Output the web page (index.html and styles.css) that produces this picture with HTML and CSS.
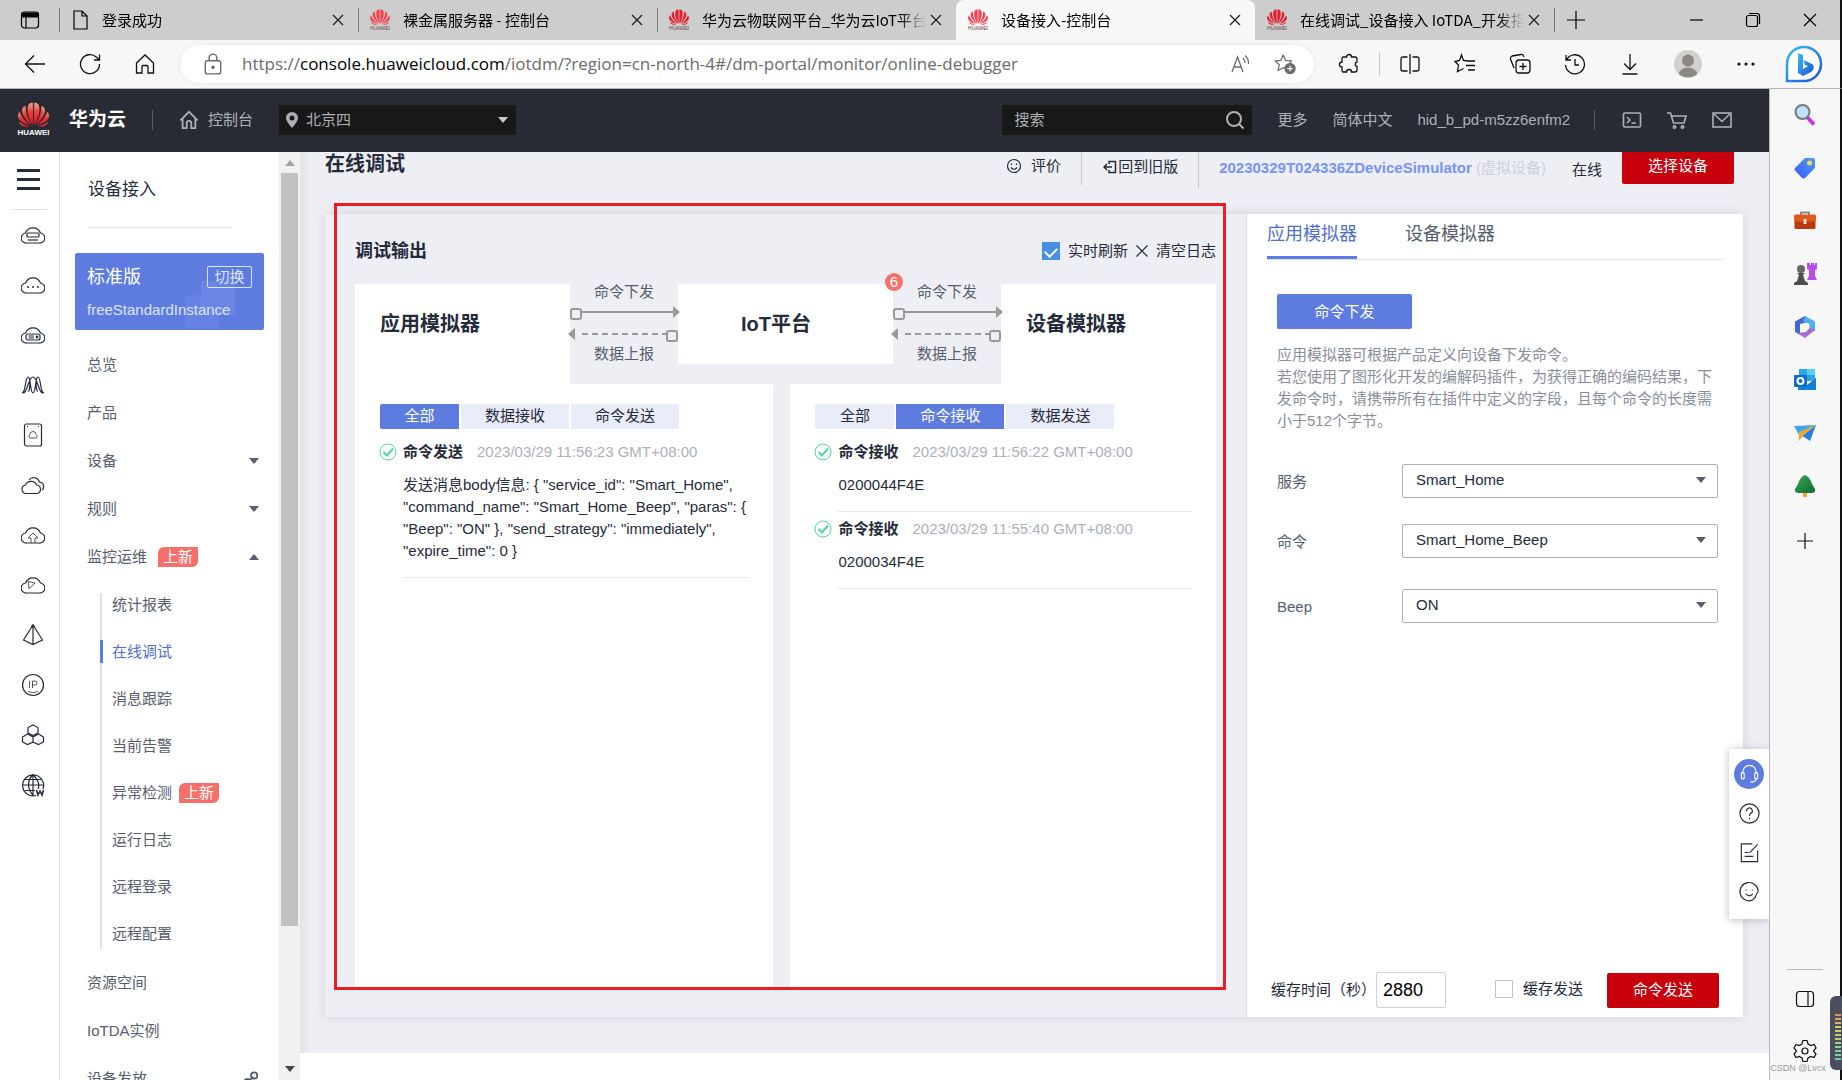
FILE: index.html
```html
<!DOCTYPE html>
<html lang="zh-CN">
<head>
<meta charset="utf-8">
<title>设备接入-控制台</title>
<link rel="stylesheet" href="styles.css">
</head>
<body>
<svg class="defs" aria-hidden="true">
  <defs>
    <linearGradient id="petalFill" x1="0" y1="0" x2="0" y2="1"><stop offset="0" stop-color="#f8a48c"/><stop offset=".45" stop-color="#ec3a38"/><stop offset="1" stop-color="#d81422"/></linearGradient>
    <linearGradient id="bingFill" x1="0" y1="0" x2="1" y2="1"><stop offset="0" stop-color="#35c1f1"/><stop offset="1" stop-color="#1b4fd8"/></linearGradient>
    <linearGradient id="tagFill" x1="0" y1="1" x2="1" y2="0"><stop offset="0" stop-color="#3b5bfd"/><stop offset="1" stop-color="#4f9bf0"/></linearGradient>
    <linearGradient id="treeFill" x1="0" y1="0" x2="1" y2="1"><stop offset="0" stop-color="#3ea55a"/><stop offset="1" stop-color="#0c6b2c"/></linearGradient>
    <symbol id="flower" viewBox="0 0 34 26">
      <path d="M16.600 24C11 17 9.500 6 12 2.500C13 1 15 .5 16.300 .8Z"/><path d="M17.400 24C23 17 24.500 6 22 2.500C21 1 19 .5 17.700 .8Z"/>
      <path d="M15.500 24C8.500 19 4.500 12.500 5 8C5.300 6 7.500 4.300 8.600 4.200C8.600 11 11 18 15.500 24Z"/><path d="M18.500 24C25.500 19 29.500 12.500 29 8C28.700 6 26.500 4.300 25.400 4.200C25.400 11 23 18 18.500 24Z"/>
      <path d="M14 24.200C6 22.500 .8 18.500 .8 14.500C.8 12.500 1.800 11 2.500 10.500C4.500 16 9 21 14 24.200Z"/><path d="M20 24.200C28 22.500 33.200 18.500 33.200 14.500C33.200 12.500 32.200 11 31.500 10.500C29.500 16 25 21 20 24.200Z"/>
      <path d="M12.800 25C8 26.500 3.500 25.500 2 20.800C5 23 9 24.500 12.800 25Z"/><path d="M21.200 25C26 26.500 30.500 25.500 32 20.800C29 23 25 24.500 21.200 25Z"/>
    </symbol>
    <symbol id="close" viewBox="0 0 12 12"><path d="M1 1L11 11M11 1L1 11"/></symbol>
    <symbol id="cloud" viewBox="0 0 24 24"><path d="M6 20A5 5 0 0 1 4.500 10A8 8 0 0 1 19.500 10A5 5 0 0 1 18 20Z"/></symbol>
    <symbol id="pass" viewBox="0 0 18 18"><circle cx="9" cy="9" r="8" stroke-width="1"/><path d="M4.500 9L8 12.500L14 5.500" stroke-width="2"/></symbol>
    <symbol id="down" viewBox="0 0 10 8"><path d="M0 1H10L5 7Z"/></symbol>
  </defs>
</svg>

<header class="tabstrip">
  <button class="tab-menu" aria-label="标签页操作"><svg class="icon" viewBox="0 0 20 20"><rect x="1.500" y="2" width="17" height="16" rx="3"/><path d="M2 3H18V7H2Z" fill="currentColor"/><path d="M6 7V18"/></svg></button>
  <div class="tab"><svg class="icon" viewBox="0 0 20 20"><path d="M4 1H12L17 6V19H4Z M12 1V6H17"/></svg><a href="#">登录成功</a><button aria-label="关闭"><svg class="close"><use href="#close"/></svg></button></div>
  <div class="tab"><span class="fav soft"><svg><use href="#flower"/></svg><small>HUAWEI</small></span><a href="#">裸金属服务器 - 控制台</a><button aria-label="关闭"><svg class="close"><use href="#close"/></svg></button></div>
  <div class="tab"><span class="fav"><svg><use href="#flower"/></svg><small>HUAWEI</small></span><a href="#">华为云物联网平台_华为云IoT平台</a><button aria-label="关闭"><svg class="close"><use href="#close"/></svg></button></div>
  <div class="tab active"><span class="fav soft"><svg><use href="#flower"/></svg><small>HUAWEI</small></span><a href="#">设备接入-控制台</a><button aria-label="关闭"><svg class="close"><use href="#close"/></svg></button></div>
  <div class="tab"><span class="fav"><svg><use href="#flower"/></svg><small>HUAWEI</small></span><a href="#">在线调试_设备接入 IoTDA_开发指</a><button aria-label="关闭"><svg class="close"><use href="#close"/></svg></button></div>
  <button class="new-tab" aria-label="新建标签页"><svg class="icon" viewBox="0 0 20 20"><path d="M10 1V19M1 10H19"/></svg></button>
  <div class="window-buttons">
    <button aria-label="最小化"><svg class="icon" viewBox="0 0 20 20"><path d="M4 10H17"/></svg></button>
    <button aria-label="还原"><svg class="icon" viewBox="0 0 20 20"><rect x="3.500" y="5.500" width="11" height="11" rx="2"/><path d="M6 3.500H14A2.500 2.500 0 0 1 16.500 6V14"/></svg></button>
    <button aria-label="关闭窗口"><svg class="icon" viewBox="0 0 20 20"><path d="M4 4L16 16M16 4L4 16"/></svg></button>
  </div>
</header>

<div class="toolbar">
  <div class="nav-buttons">
    <button aria-label="后退"><svg class="icon" viewBox="0 0 22 22"><path d="M21 11H2M10 2.500L1.500 11L10 19.500"/></svg></button>
    <button aria-label="刷新"><svg class="icon" viewBox="0 0 22 22"><path d="M20.500 11A9.500 9.500 0 1 1 17.500 4.200L20 6.500M20.500 1.500V7H15"/></svg></button>
    <button aria-label="主页"><svg class="icon" viewBox="0 0 22 22"><path d="M2.500 10L11 2L19.500 10V20H14V13.500A1.500 1.500 0 0 0 12.500 12.500H9.500A1.500 1.500 0 0 0 8 13.500V20H2.500Z"/></svg></button>
  </div>
  <div class="address">
    <svg class="icon" viewBox="0 0 20 20"><rect x="3" y="7" width="14" height="12" rx="2"/><path d="M6.500 7V4.500A3.500 3.500 0 0 1 13.500 4.500V7"/><circle cx="10" cy="13" r="1" fill="currentColor"/></svg>
    <span class="url">https://<b>console.huaweicloud.com</b>/iotdm/?region=cn-north-4#/dm-portal/monitor/online-debugger</span>
    <button aria-label="朗读"><svg class="icon" viewBox="0 0 22 22"><path d="M2 19L7.500 4L13 19M4 14H11M13 5Q15 7 15 10M15 2.500Q19 6 18.500 11"/></svg></button>
    <button aria-label="收藏"><svg class="icon" viewBox="0 0 24 24"><path d="M10 2L12.500 8L19 8.700L17 11M13 17L10 16L4.500 19L5.800 12.800L1.500 8.700L7.500 8L10 2"/><circle cx="17.500" cy="17" r="5.500" fill="#6b6b6b"/><path d="M17.500 14V20M14.500 17H20.500" stroke="#fff"/></svg></button>
  </div>
  <div class="browser-actions">
    <button aria-label="扩展"><svg class="icon" viewBox="0 0 22 22"><path d="M5 4H8.500A2.500 2.500 0 0 1 13.500 4H17Q19 4 19 6V9A2.300 2.300 0 0 0 19 13.500V17Q19 19 17 19H13.500A2.500 2.500 0 0 0 8.500 19H5Q4 19 4 17V14A2.500 2.500 0 0 1 4 9V6Q4 4 5 4Z"/></svg></button>
    <i class="bar-split"></i>
    <button aria-label="分屏"><svg class="icon" viewBox="0 0 22 22"><path d="M8.500 4H4A2 2 0 0 0 2 6V16A2 2 0 0 0 4 18H8.500M13.500 4H18A2 2 0 0 1 20 6V16A2 2 0 0 1 18 18H13.500M11 1V21"/></svg></button>
    <button aria-label="收藏夹"><svg class="icon" viewBox="0 0 22 22"><path d="M14 8L9.500 7.500L7.500 2L5.500 7.500L1 8.500L4.500 12L3.500 18.500L9.500 15.500M13 8H21M12 12.500H21M14 17H21"/></svg></button>
    <button aria-label="集锦"><svg class="icon" viewBox="0 0 22 22"><rect x="7" y="7" width="14" height="13" rx="3"/><path d="M14 10V17M10.500 13.500H17.500M5 15L1.500 6Q1 4 3 3L12 1.500Q14 1 15 4"/></svg></button>
    <button aria-label="历史记录"><svg class="icon" viewBox="0 0 22 22"><path d="M2.500 7A9.500 9.500 0 1 1 1.500 12M2 2V7H7M11 6V12H15"/></svg></button>
    <button aria-label="下载"><svg class="icon" viewBox="0 0 22 22"><path d="M11 1V16M5 10.500L11 16.500L17 10.500M3.500 21H18.500"/></svg></button>
    <button class="avatar" aria-label="用户"><svg viewBox="0 0 28 28"><circle cx="14" cy="14" r="14" fill="#d3d0cc"/><circle cx="14" cy="10.500" r="6" fill="#8b8884"/><path d="M5 24A9 6.500 0 0 1 23 24A14 14 0 0 1 5 24" fill="#8b8884"/></svg></button>
    <button aria-label="更多"><svg class="icon" viewBox="0 0 22 22"><g fill="currentColor" stroke="none"><circle cx="4" cy="11" r="1.600"/><circle cx="11" cy="11" r="1.600"/><circle cx="18" cy="11" r="1.600"/></g></svg></button>
    <button class="bing" aria-label="必应"><svg viewBox="0 0 38 38"><path d="M2 36V19A17 17 0 1 1 19 36Z" fill="#fff" stroke="url(#bingFill)" stroke-width="2.500"/><path d="M13 8L18 10V24L23 21L19.500 19.500L18.500 15L28 19.500Q30 24 26 27L18 31L13 28Z" fill="url(#bingFill)"/></svg></button>
  </div>
</div>

<div class="workspace">
  <div class="page">
    <header class="console-bar">
      <a class="brand" href="#"><span class="logo"><svg><use href="#flower"/></svg><small>HUAWEI</small></span><strong>华为云</strong></a>
      <i class="rule"></i>
      <a class="console-home" href="#"><svg class="icon thick" viewBox="0 0 22 22"><path d="M1.500 11.500L11 2L20.500 11.500M4 9.500V20H8.500V14.500A2.500 2.500 0 0 1 13.500 14.500V20H18V9.500"/></svg>控制台</a>
      <button class="region"><svg class="pin" viewBox="0 0 12 16"><path d="M6 0A6 6 0 0 1 12 6Q12 9 6 16Q0 9 0 6A6 6 0 0 1 6 0ZM6 3.500A2.500 2.500 0 1 0 6 8.500A2.500 2.500 0 1 0 6 3.500Z" fill-rule="evenodd"/></svg><span>北京四</span><svg class="caret"><use href="#down"/></svg></button>
      <label class="search"><input type="text" placeholder="搜索" aria-label="搜索"><svg class="icon thick" viewBox="0 0 20 20"><circle cx="9" cy="9" r="7"/><path d="M14 14L18.500 18.500"/></svg></label>
      <nav class="account"><a href="#">更多</a><a href="#">简体中文</a><a href="#">hid_b_pd-m5zz6enfm2</a></nav>
      <i class="rule"></i>
      <div class="quick">
        <a href="#" aria-label="终端"><svg class="icon" viewBox="0 0 20 20"><rect x="1.500" y="3" width="17" height="14" rx="1"/><path d="M5 7L8 10L5 13M9.500 13H14"/></svg></a>
        <a href="#" aria-label="购物车"><svg class="icon" viewBox="0 0 20 20"><path d="M0 3H3.500L6.500 13H17L19 6H4.500"/><circle cx="7.500" cy="17" r="1.200"/><circle cx="15.500" cy="17" r="1.200"/></svg></a>
        <a href="#" aria-label="消息"><svg class="icon" viewBox="0 0 20 20"><rect x="1" y="3" width="18" height="14"/><path d="M2 4L10 11.500L18 4"/></svg></a>
      </div>
    </header>

    <div class="body">
      <nav class="rail">
        <button class="burger" aria-label="服务列表"><span></span><span></span><span></span></button>
        <a href="#" aria-label="弹性云服务器"><svg class="icon" viewBox="0 0 24 24"><use href="#cloud"/><rect x="6" y="10" width="12" height="4" rx="1"/><path d="M7 17H17"/></svg></a>
        <a href="#" aria-label="云服务"><svg class="icon" viewBox="0 0 24 24"><use href="#cloud"/><g fill="currentColor" stroke="none"><circle cx="7" cy="14" r="1"/><circle cx="12" cy="14" r="1"/><circle cx="17" cy="14" r="1"/></g></svg></a>
        <a href="#" aria-label="裸金属服务器"><svg class="icon" viewBox="0 0 24 24"><use href="#cloud"/><rect x="5" y="11" width="14" height="6" rx="2"/><path d="M7.500 13H13M7.500 15H13"/><circle cx="16" cy="14" r=".8"/></svg></a>
        <a href="#" aria-label="弹性伸缩"><svg class="icon" viewBox="0 0 24 24"><path d="M1 20C5 20 4 4 7 4S9 20 12 20S14 4 17 4S19 20 23 20M2 20C7 20 7 4 12 4S17 20 22 20M7 4C10 4 9 20 7 18M17 4C14 4 15 20 17 18"/></svg></a>
        <a href="#" aria-label="云硬盘"><svg class="icon" viewBox="0 0 24 24"><rect x="3.500" y="1" width="17" height="22" rx="2"/><path d="M9 15A2 2 0 0 1 9 11.500A3 3 0 0 1 15 11.500A2 2 0 0 1 15 15Z" stroke-width=".8"/><path d="M6 3.500H7M17 3.500H18"/></svg></a>
        <a href="#" aria-label="虚拟私有云"><svg class="icon" viewBox="0 0 24 24"><path d="M5 20.500A4.300 4.300 0 0 1 4.500 12A6 6 0 0 1 15.500 12A4.300 4.300 0 0 1 16 20.500ZM8 7A6 6 0 0 1 18.500 9A4.500 4.500 0 0 1 21 17"/></svg></a>
        <a href="#" aria-label="云备份"><svg class="icon" viewBox="0 0 24 24"><use href="#cloud"/><path d="M10 20V15H7L12 10L17 15H14V20" stroke-width=".8"/></svg></a>
        <a href="#" aria-label="CDN"><svg class="icon" viewBox="0 0 24 24"><use href="#cloud"/><path d="M7 8.500L14 10L8 15.500Z" stroke-width=".8"/></svg></a>
        <a href="#" aria-label="负载均衡"><svg class="icon" viewBox="0 0 24 24"><path d="M12 2L2.500 17L12 21.500L21.500 17ZM12 2V21"/><circle cx="12" cy="3" r="1" fill="currentColor"/></svg></a>
        <a href="#" aria-label="弹性公网IP"><svg class="icon" viewBox="0 0 24 24"><circle cx="12" cy="12" r="10.500"/><path d="M8.500 8V15M11.500 15V8H14A2 2 0 0 1 14 12H11.500M7 18.500Q12 21 17 18.500" stroke-width=".8"/></svg></a>
        <a href="#" aria-label="数据库"><svg class="icon" viewBox="0 0 24 24"><path d="M12 2L17 4.500V10L12 12.500L7 10V4.500ZM6.500 11L12 14V19L6.500 21.500L1.500 19V14ZM17.500 11L12 14V19L17.500 21.500L22.500 19V14Z"/></svg></a>
        <a href="#" aria-label="域名"><svg class="icon" viewBox="0 0 24 24"><path d="M22 16A10.500 10.500 0 1 0 15 22.500M12 1.500V22M2 12H22M4 6.500H20M4 17.500H14M12 1.500Q3 11 12 22.500M12 1.500Q20 10 17 16"/><path d="M15.500 17L17 22L19 18L21 22L22.500 17" stroke-width="1.600"/></svg></a>
      </nav>

      <aside class="side">
        <h2>设备接入</h2>
        <section class="instance">
          <div><strong>标准版</strong><button>切换</button></div>
          <p>freeStandardInstance</p>
        </section>
        <ul class="menu">
          <li><a href="#">总览</a></li>
          <li><a href="#">产品</a></li>
          <li><a href="#">设备<svg class="caret"><use href="#down"/></svg></a></li>
          <li><a href="#">规则<svg class="caret"><use href="#down"/></svg></a></li>
          <li><a href="#">监控运维<em class="new">上新</em><svg class="caret up"><use href="#down"/></svg></a>
            <ul class="submenu">
              <li><a href="#">统计报表</a></li>
              <li class="current"><a href="#">在线调试</a></li>
              <li><a href="#">消息跟踪</a></li>
              <li><a href="#">当前告警</a></li>
              <li><a href="#">异常检测<em class="new">上新</em></a></li>
              <li><a href="#">运行日志</a></li>
              <li><a href="#">远程登录</a></li>
              <li><a href="#">远程配置</a></li>
            </ul>
          </li>
          <li><a href="#">资源空间</a></li>
          <li><a href="#">IoTDA实例</a></li>
          <li><a href="#">设备发放<svg class="icon link" viewBox="0 0 18 18"><g stroke-width="2"><rect x="9" y="1.500" width="7" height="7" rx="3.500"/><rect x="1.500" y="9" width="7" height="7" rx="3.500"/><path d="M6.500 11.500L11.500 6.500"/></g></svg></a></li>
        </ul>
      </aside>
      <div class="scrollbar"><svg class="caret up"><use href="#down"/></svg><span></span><svg class="caret"><use href="#down"/></svg></div>

      <main>
        <div class="title-row">
          <h1>在线调试</h1>
          <a class="rate" href="#"><svg class="icon" viewBox="0 0 16 16"><circle cx="8" cy="8" r="6.500"/><path d="M5 9.500Q8 13 11 9.500M5.500 5.500V7M10.500 5.500V7"/></svg>评价</a>
          <a class="legacy" href="#"><svg class="icon" viewBox="0 0 14 16"><path d="M6 5V2.500H12.500V13.500H6V11M1 8H9M4 5L1 8L4 11" stroke-width="1.500"/></svg>回到旧版</a>
          <span class="device"><b>20230329T024336ZDeviceSimulator</b> (虚拟设备)</span>
          <span class="state">在线</span>
          <button class="danger">选择设备</button>
        </div>

        <div class="panel">
          <section class="output">
            <div class="output-head">
              <h3>调试输出</h3>
              <label class="tick"><input type="checkbox" checked>实时刷新</label>
              <button class="clear"><svg class="icon" viewBox="0 0 14 14"><path d="M1.500 1.500L12.500 12.500M12.500 1.500L1.500 12.500"/></svg>清空日志</button>
            </div>
            <div class="flow">
              <h4>应用模拟器</h4>
              <div class="link-pair"><span>命令下发</span>
                <svg viewBox="0 0 112 36"><path d="M14 6H106"/><path d="M14 28H98" stroke-dasharray="6 4"/><rect x="3" y="3" width="10" height="10" rx="2"/><rect x="99" y="25" width="10" height="10" rx="2"/><path class="tip" d="M105 0L112 6L105 12ZM7 22L0 28L7 34Z"/></svg>
                <span>数据上报</span></div>
              <h4 class="iot">IoT平台<em>6</em></h4>
              <div class="link-pair"><span>命令下发</span>
                <svg viewBox="0 0 112 36"><path d="M14 6H106"/><path d="M14 28H98" stroke-dasharray="6 4"/><rect x="3" y="3" width="10" height="10" rx="2"/><rect x="99" y="25" width="10" height="10" rx="2"/><path class="tip" d="M105 0L112 6L105 12ZM7 22L0 28L7 34Z"/></svg>
                <span>数据上报</span></div>
              <h4>设备模拟器</h4>
            </div>
            <div class="logs">
              <div class="log">
                <div class="filter"><button class="on">全部</button><button>数据接收</button><button>命令发送</button></div>
                <article><svg><use href="#pass"/></svg><header><b>命令发送</b><time>2023/03/29 11:56:23 GMT+08:00</time></header><p>发送消息body信息: { "service_id": "Smart_Home", "command_name": "Smart_Home_Beep", "paras": { "Beep": "ON" }, "send_strategy": "immediately", "expire_time": 0 }</p></article>
              </div>
              <div class="log">
                <div class="filter"><button>全部</button><button class="on">命令接收</button><button>数据发送</button></div>
                <article><svg><use href="#pass"/></svg><header><b>命令接收</b><time>2023/03/29 11:56:22 GMT+08:00</time></header><p>0200044F4E</p></article>
                <article><svg><use href="#pass"/></svg><header><b>命令接收</b><time>2023/03/29 11:55:40 GMT+08:00</time></header><p>0200034F4E</p></article>
              </div>
            </div>
            <div class="marker"></div>
          </section>

          <form class="simulator">
            <nav class="sim-tabs"><a class="on" href="#">应用模拟器</a><a href="#">设备模拟器</a></nav>
            <div class="sim-body">
              <button type="button" class="primary">命令下发</button>
              <p>应用模拟器可根据产品定义向设备下发命令。<br>若您使用了图形化开发的编解码插件，为获得正确的编码结果，下发命令时，请携带所有在插件中定义的字段，且每个命令的长度需小于512个字节。</p>
              <div class="field"><label for="service">服务</label><div class="select"><select id="service"><option>Smart_Home</option></select><svg class="caret"><use href="#down"/></svg></div></div>
              <div class="field"><label for="command">命令</label><div class="select"><select id="command"><option>Smart_Home_Beep</option></select><svg class="caret"><use href="#down"/></svg></div></div>
              <div class="field last"><label for="beep">Beep</label><div class="select"><select id="beep"><option>ON</option></select><svg class="caret"><use href="#down"/></svg></div></div>
            </div>
            <div class="send-row">
              <label for="ttl">缓存时间（秒）</label><input id="ttl" type="text" value="2880">
              <label class="tick"><input type="checkbox">缓存发送</label>
              <button type="button" class="danger">命令发送</button>
            </div>
          </form>
        </div>

        <div class="helper">
          <button class="agent" aria-label="客服"><svg class="icon" viewBox="0 0 24 24"><path d="M5 11V9.500A7 7 0 0 1 19 9.500V11M19 16Q19 20 13 20"/><rect x="3.500" y="10" width="3" height="6.500" rx="1"/><rect x="17.500" y="10" width="3" height="6.500" rx="1"/></svg></button>
          <button aria-label="帮助"><svg class="icon" viewBox="0 0 24 24"><circle cx="12" cy="12" r="10"/><path d="M9 9.500A3 3 0 1 1 13 12Q12 12.700 12 14.500M12 16.500V18"/></svg></button>
          <button aria-label="反馈"><svg class="icon" viewBox="0 0 24 24"><path d="M15 3H3.500V21.500H20.500V10M20.500 3.500L12 12.500M7 12H11M7 16H16"/></svg></button>
          <button aria-label="评价"><svg class="icon" viewBox="0 0 24 24"><path d="M15 21A9.500 9.500 0 1 1 21 12Q19 15 18 18L15 21M8 14.500Q12 18.500 15.500 14.500M8.500 10V11M15 10V11"/></svg></button>
        </div>
      </main>
    </div>
  </div>

  <aside class="edge">
    <button aria-label="搜索"><svg viewBox="0 0 24 24"><path d="M14 14L21 21.500" stroke="#c239e8" stroke-width="4"/><circle cx="9.500" cy="9" r="7" fill="#bfe2f8" stroke="#77777c" stroke-width="2"/></svg></button>
    <button aria-label="购物"><svg viewBox="0 0 24 24"><path d="M2 12L12 2H20Q22 2 22 4V12L12 22Q10 23 8.500 21.500L2 14.500Q1 13 2 12Z" fill="url(#tagFill)"/><circle cx="16.500" cy="7" r="2.500" fill="#f4dd56"/></svg></button>
    <button aria-label="工具"><svg viewBox="0 0 24 24"><path d="M8 7V3.500H16V7" fill="none" stroke="#8a8a8a" stroke-width="2"/><rect x="1.500" y="9" width="21" height="11" rx="1.500" fill="#b73a0c"/><rect x="1" y="5.500" width="22" height="7" rx="1.500" fill="#e05a1d"/><rect x="10.500" y="10" width="3" height="5" fill="#ddd"/></svg></button>
    <button aria-label="游戏"><svg viewBox="0 0 24 24"><path d="M14 1H17V3H18V1H21V3H22V1H24V7L22 8V14L24 18H14L16 14V8L14 7Z" fill="#b74df0"/><circle cx="8" cy="7" r="4" fill="#666"/><path d="M4 11H12L10 13L12 19L15 21V23H1V21L4 19L6 13Z" fill="#4d4d4d"/></svg></button>
    <button aria-label="Microsoft 365"><svg viewBox="0 0 24 24"><path d="M12 1L2 6.500V17L7 19.500V9L17 6.500Z" fill="#4564d8"/><path d="M12 1L22 6.500V16L16.500 13V9L10 6Z" fill="#49b1ec"/><path d="M22 15L12 23L4 18L13 17L17 12.500Z" fill="#a36bd4"/></svg></button>
    <button aria-label="Outlook"><svg viewBox="0 0 24 24"><rect x="6" y="1" width="16" height="12" fill="#2fa5e8"/><rect x="14" y="1" width="8" height="6" fill="#54d0fb"/><path d="M5 11L14 17L23 10V22H5Z" fill="#147fd4"/><rect x="1" y="7" width="13" height="12" rx="1" fill="#0a6fc4"/><circle cx="7.500" cy="13" r="3" fill="none" stroke="#fff" stroke-width="2"/></svg></button>
    <button aria-label="投递"><svg viewBox="0 0 24 24"><path d="M1 5L23 4L6 14Z" fill="#3ea7ec"/><path d="M23 4L6 11V20L11 14Z" fill="#f1a52a"/><path d="M23 4L9.500 15L17 20Z" fill="#2380df"/></svg></button>
    <button aria-label="E-tree"><svg viewBox="0 0 24 24"><rect x="10" y="17" width="4" height="6" fill="#f0a32f"/><path d="M12 1Q17 3 19 10L22 15Q23 19 18 19H6Q1 19 2 15L5 10Q7 3 12 1Z" fill="url(#treeFill)"/></svg></button>
    <button class="add" aria-label="添加"><svg class="icon" viewBox="0 0 24 24"><path d="M12 4V20M4 12H20"/></svg></button>
    <div class="edge-foot">
      <button aria-label="隐藏边栏"><svg class="icon" viewBox="0 0 24 24"><rect x="3.500" y="4.500" width="17" height="15" rx="3"/><path d="M15 5V19"/></svg></button>
      <button aria-label="设置"><svg class="icon" viewBox="0 0 24 24"><path d="M10 1.500H14L15 5L18 6.500L21 5.500L23 9L20.500 12L23 15L21 18.500L18 17.500L15 19L14 22.500H10L9 19L6 17.500L3 18.500L1 15L3.500 12L1 9L3 5.500L6 6.500L9 5Z"/><circle cx="12" cy="12" r="3"/></svg></button>
      <small>CSDN @Lvcx</small>
    </div>
    <div class="meter"><span></span></div>
  </aside>
</div>
</body>
</html>
```

FILE: styles.css
```css
* { box-sizing: border-box; }
body {
  margin: 0;
  height: 100vh;
  overflow: hidden;
  display: flex;
  flex-direction: column;
  font: 15px/22px "Liberation Sans", "Noto Sans CJK SC", sans-serif;
  color: #252b3a;
  background: #fff;
}
h1, h2, h3, h4, p, ul { margin: 0; padding: 0; }
ul { list-style: none; }
a { color: inherit; text-decoration: none; }
button { font: inherit; color: inherit; background: none; border: 0; padding: 0; display: grid; place-items: center; }
em { font-style: normal; }
svg { display: block; flex: none; }
.defs { position: absolute; width: 0; height: 0; }
.icon { width: 20px; height: 20px; fill: none; stroke: currentColor; stroke-width: 1.2; }
.thick { stroke-width: 2; }
.caret { width: 10px; height: 8px; fill: #575d6c; }
.up { transform: rotate(180deg); }

/* tab strip */
.tabstrip { height: 40px; flex: none; display: flex; align-items: center; background: #cdcdcd; color: #000; border-right: 2px solid #111; font-family: "Noto Sans CJK SC", sans-serif; }
.tab-menu { width: 59px; height: 40px; }
.tab { width: 299px; height: 40px; padding: 0 14px 0 11px; display: flex; align-items: center; gap: 12px; position: relative; }
.tab::before { content: ""; position: absolute; left: 0; top: 8px; height: 24px; border-left: 1px solid #777; }
.tab a { flex: 1; margin-right: -8px; overflow: hidden; white-space: nowrap; mask-image: linear-gradient(90deg, #000 88%, transparent); }
.tab.active { background: #f7f7f7; border-radius: 8px 8px 0 0; }
.tab.active::before, .tab.active + .tab::before { display: none; }
.close { width: 12px; height: 12px; stroke: #222; stroke-width: 1.3; }
.fav { width: 22px; display: flex; flex-direction: column; align-items: center; fill: #e5202e; }
.fav svg { width: 22px; height: 16px; }
.fav.soft { fill: #f4444f; }
.fav small { font: 5px/6px "Liberation Sans", sans-serif; color: #644; }
.new-tab { width: 44px; border-left: 1px solid #777; height: 24px; padding-right: 2px; }
.window-buttons { margin-left: auto; display: flex; gap: 37px; padding-right: 20px; }

/* address bar */
.toolbar { height: 49px; flex: none; display: flex; align-items: center; background: #f7f7f7; color: #111; border-bottom: 1px solid #b5b5b5; border-right: 2px solid #111; }
.toolbar .icon { width: 22px; height: 22px; stroke-width: 1.3; }
.nav-buttons { width: 180px; display: flex; padding-left: 24px; gap: 33px; }
.address { flex: 1; height: 38px; display: flex; align-items: center; border-radius: 19px; padding: 0 18px 0 22px; background: #fff; color: #6b6b6b; box-shadow: 0 0 4px #e4e4e4; }
.url { flex: 1; padding-left: 18px; font: 17px/24px "Open Sans", sans-serif; white-space: nowrap; }
.url b { font-weight: 400; color: #000; }
.address button { margin-left: 22px; }
.browser-actions { width: 526px; display: flex; align-items: center; gap: 33px; padding-left: 24px; }
.bar-split { height: 24px; margin: 0 -14px; border-left: 1px solid #c8c8c8; }
.avatar svg { width: 28px; height: 28px; }
.bing { margin-left: -5px; }
.bing svg { width: 38px; height: 38px; }

.workspace { flex: 1; min-height: 0; display: flex; }
.page { flex: 1; min-width: 0; display: flex; flex-direction: column; }

/* console header */
.console-bar { height: 63px; flex: none; display: flex; align-items: center; padding: 0 37px 2px 16px; background: #282b33; color: #adb0b8; }
.brand { display: flex; align-items: center; gap: 18px; color: #fff; }
.brand strong { font-size: 19px; }
.logo { width: 35px; display: flex; flex-direction: column; align-items: center; gap: 1px; fill: url(#petalFill); }
.logo svg { width: 33px; height: 25px; }
.logo small { font: bold 8px/9px "Liberation Sans", sans-serif; }
.rule { height: 20px; border-left: 1px solid #5a5d66; margin: 0 26px; }
.console-home { display: flex; align-items: center; gap: 9px; }
.region { width: 237px; height: 30px; margin-left: 26px; padding: 0 8px 0 7px; display: flex; align-items: center; gap: 8px; background: #181818; border-radius: 2px; }
.region span { flex: 1; text-align: left; }
.region .caret { fill: #c5c8d0; height: 10px; }
.pin { width: 12px; height: 16px; fill: #adb0b8; }
.search { width: 250px; height: 30px; margin-left: auto; padding: 0 7px 0 12px; display: flex; align-items: center; background: #181818; border-radius: 2px; }
.search input { flex: 1; min-width: 0; border: 0; padding: 0; background: none; color: inherit; font: inherit; }
.search input::placeholder { color: #adb0b8; }
.account { display: flex; gap: 25px; padding-left: 25px; }
.account + .rule { margin: 0 27px 0 24px; }
.quick { display: flex; gap: 25px; }
.quick .icon { stroke-width: 1.6; }

.body { flex: 1; min-height: 0; display: flex; }

/* service rail */
.rail { width: 60px; flex: none; display: flex; flex-direction: column; border-right: 1px solid #dfe1e6; }
.rail a { height: 50px; padding-left: 6px; display: grid; place-items: center; }
.rail a .icon { width: 24px; height: 24px; }
.burger { width: 34px; height: 58px; margin: 0 13px; align-content: center; gap: 6px; border-bottom: 1px solid #dfe1e6; justify-items: start; padding: 0 0 3px 4px; }
.burger span { width: 23px; height: 3px; background: #252b3a; }

/* product navigation */
.side { width: 219px; flex: none; overflow: hidden; padding: 0 15px; }
.side h2 { height: 76px; margin: 0 32px 25px 13px; padding-top: 26px; font-size: 17px; line-height: 24px; font-weight: 400; border-bottom: 1px solid #dfe1e6; }
.instance { height: 77px; padding: 12px 12px 0; border-radius: 2px; color: #fff; background: linear-gradient(#6a86e4, #6a86e4) 126px 28px / 34px 34px no-repeat, linear-gradient(#6581e2, #6581e2) 110px 42px / 34px 33px no-repeat, #5e7ce0; }
.instance div { display: flex; align-items: center; justify-content: space-between; height: 24px; }
.instance strong { font-size: 18px; font-weight: 400; }
.instance button { width: 45px; height: 22px; border: 1px solid #dfe5f9; border-radius: 2px; color: #dfe5f9; line-height: 18px; }
.instance p { padding-top: 10px; color: #dfe5f9; }
.menu { padding-top: 11px; color: #575d6c; }
.menu a { height: 48px; display: flex; align-items: center; padding: 0 5px 0 12px; }
.menu .caret, .menu .link { margin-left: auto; }
.link { width: 16px; height: 16px; }
.submenu { position: relative; padding: 0 0 2px 25px; }
.submenu::before { content: ""; position: absolute; left: 25px; top: 12px; bottom: 10px; width: 2px; background: #dfe1e6; }
.submenu a { height: 47px; }
.current { position: relative; color: #526ecc; }
.current::before { content: ""; position: absolute; left: 0; top: 12px; width: 3px; height: 23px; background: #5e7ce0; }
.new { margin-left: 11px; padding: 0 5px; height: 20px; line-height: 19px; border-radius: 6px 0; background: #f66f6a; color: #fff; }
.submenu .new { margin-left: 7px; }
.scrollbar { width: 21px; flex: none; display: flex; flex-direction: column; align-items: center; padding: 7px 0; gap: 6px; background: #f1f1f1; }
.scrollbar span { width: 17px; height: 753px; background: #c1c1c1; }
.scrollbar .caret { fill: #a3a3a3; }
.scrollbar .caret:last-child { margin-top: auto; fill: #444; }

/* debugger page */
main { flex: 1; min-width: 0; position: relative; padding: 0 26px 0 25px; background: linear-gradient(90deg, #e2e3e9, transparent 10px), #eeeff5; margin-bottom: 27px; }
.title-row { height: 62px; display: flex; align-items: flex-start; white-space: nowrap; }
.title-row h1 { font-size: 20px; line-height: 24px; margin-right: auto; }
.title-row .rate { display: flex; align-items: center; gap: 9px; padding: 3px 20px 8px 0; border-right: 1px solid #c6c8d0; }
.rate .icon { width: 16px; height: 16px; }
.legacy { display: flex; align-items: center; gap: 1px; padding: 4px 20px 10px 21px; border-right: 1px solid #c6c8d0; }
.legacy .icon { width: 14px; height: 16px; }
.device { padding: 5px 26px 0 20px; color: #cdd0d9; }
.device b { color: #7693f5; }
.state { padding: 7px 20px 0 0; }
.danger { width: 112px; height: 35px; background: #c7000b; color: #fff; border-radius: 2px; }
.title-row .danger { height: 32px; margin-right: 9px; padding-bottom: 4px; border-radius: 0 0 2px 2px; }
.panel { height: 803px; display: flex; box-shadow: 0 0 10px #cfd0d6; }
.output { flex: 1; min-width: 0; position: relative; padding: 0 30px 30px; display: flex; flex-direction: column; background: #eeeff5; border-right: 1px solid #dfe1e6; }
.output-head { height: 70px; flex: none; display: flex; align-items: center; padding-top: 3px; }
.output-head h3 { font-size: 18px; margin-right: auto; }
.tick { display: flex; align-items: center; gap: 8px; }
.tick input { appearance: none; margin: 0; width: 18px; height: 18px; border: 1px solid #c2c5cf; background: #fff; display: grid; place-items: center; }
.tick input:checked { background: #4a90e2; border-color: #4a90e2; }
.tick input:checked::before { content: ""; width: 10px; height: 6px; border: solid #fff; border-width: 0 0 2px 2px; transform: rotate(-45deg); }
.clear { display: flex; align-items: center; gap: 7px; margin-left: 7px; }
.clear .icon { width: 14px; height: 14px; }
.flow { display: grid; grid-template-columns: 215fr 108fr 215fr 108fr 215fr; height: 100px; flex: none; }
.flow h4 { background: #fff; font-size: 20px; line-height: 80px; padding-left: 25px; }
.flow .iot { height: 80px; position: relative; padding-left: 63px; }
.iot em { position: absolute; right: -10px; top: -11px; width: 18px; height: 18px; border-radius: 9px; background: #f66f6a; color: #fff; font: 15px/18px "Liberation Sans", sans-serif; text-align: center; }
.link-pair { display: flex; flex-direction: column; align-items: center; height: 84px; line-height: 16px; color: #575d6c; z-index: 1; }
.link-pair svg { width: 112px; height: 36px; margin: 6px -3px 0; fill: none; stroke: #999; stroke-width: 2; }
.link-pair .tip { fill: #999; stroke: none; }
.link-pair span:last-child { padding-top: 4px; }
.logs { flex: 1; display: flex; gap: 17px; }
.log { background: #fff; padding: 20px 24px 0 25px; flex: 426; }
.log:first-child { flex: 418; }
.filter { display: flex; gap: 2px; }
.filter button { width: 108px; height: 25px; background: #e9edfa; padding-bottom: 1px; }
.filter button:first-child { width: 79px; border-radius: 2px 0 0 2px; }
.filter button:last-child { border-radius: 0 2px 2px 0; }
.filter .on { background: #5e7ce0; color: #fff; }
.log article { display: grid; grid-template-columns: 23px 1fr; padding-top: 12px; }
.log article + article { padding-top: 6px; }
.log article > svg { width: 18px; height: 18px; margin: 2px 0 0 -1px; fill: none; stroke: #50d4ab; }
.log header { display: flex; gap: 14px; }
.log time { color: #adb0b8; }
.log p { grid-column: 2; margin-top: 11px; padding-bottom: 15px; border-bottom: 1px solid #e6e7eb; }
.marker { position: absolute; left: 9px; right: 20px; top: -11px; bottom: 27px; border: 3px solid #ed1c24; pointer-events: none; }

/* simulator form */
.simulator { width: 496px; flex: none; display: flex; flex-direction: column; background: #fff; }
.sim-tabs { display: flex; gap: 48px; height: 46px; margin: 0 20px; border-bottom: 1px solid #dfe1e6; font-size: 18px; color: #575d6c; }
.sim-tabs a { height: 45px; padding-top: 9px; }
.sim-tabs .on { color: #526ecc; border-bottom: 3px solid #5e7ce0; }
.sim-body { padding: 34px 25px 0 30px; }
.primary { width: 135px; height: 35px; background: #5e7ce0; color: #fff; border-radius: 2px; }
.sim-body p { padding: 15px 0 32px; color: #8a8e99; }
.field { display: flex; align-items: center; height: 34px; margin-bottom: 26px; color: #575d6c; }
.field.last { margin-top: 31px; }
.field label { width: 125px; padding-top: 2px; }
.select { position: relative; flex: 1; height: 34px; }
.select select { appearance: none; width: 100%; height: 34px; padding: 0 13px 2px; border: 1px solid #adb0b8; border-radius: 2px; background: #fff; color: #252b3a; font: inherit; }
.select .caret { position: absolute; right: 12px; top: 12px; }
.send-row { margin-top: auto; display: flex; align-items: center; padding: 0 24px 9px 24px; white-space: nowrap; }
.send-row > input { width: 70px; height: 36px; padding: 0 6px; border: 1px solid #d0d2d9; border-radius: 2px; font: 18px "Liberation Sans", sans-serif; color: #000; }
.send-row .tick { margin: 0 24px 2px auto; gap: 10px; }

.helper { position: absolute; right: 0; top: 597px; width: 40px; height: 170px; padding-top: 10px; display: flex; flex-direction: column; align-items: center; gap: 9px; background: #fff; box-shadow: 0 1px 8px #b9bac2; }
.helper button { width: 30px; height: 30px; }
.helper .icon { width: 23px; height: 23px; }
.helper .agent { background: #5e7ce0; color: #fff; border-radius: 15px; }

/* browser side bar */
.edge { width: 73px; flex: none; position: relative; display: flex; flex-direction: column; align-items: center; padding-top: 14px; gap: 29px; background: #f7f7f7; color: #111; border-left: 1px solid #bbb; border-right: 2px solid #111; }
.edge button { width: 24px; height: 24px; }
.edge button svg { width: 24px; height: 24px; fill: none; }
.edge .add { margin-top: 2px; }
.edge-foot { margin-top: auto; display: flex; flex-direction: column; align-items: center; border-top: 1px solid #bbb; padding-top: 17px; width: 36px; gap: 28px; }
.edge-foot small { font: 9px/12px "Liberation Sans", sans-serif; color: #999; white-space: nowrap; margin: -29px 14px 6px 0; }
.meter { position: absolute; right: -2px; bottom: 10px; width: 12px; height: 74px; border-radius: 6px 0 0 6px; background: #4b4e5c; padding: 18px 1px 8px 5px; }
.meter span { display: block; height: 100%; background: repeating-linear-gradient(transparent 0 2px, #4b4e5c 2px 4px), linear-gradient(#e58c55, #d5cf60 30%, #5ed0b0); }
```
